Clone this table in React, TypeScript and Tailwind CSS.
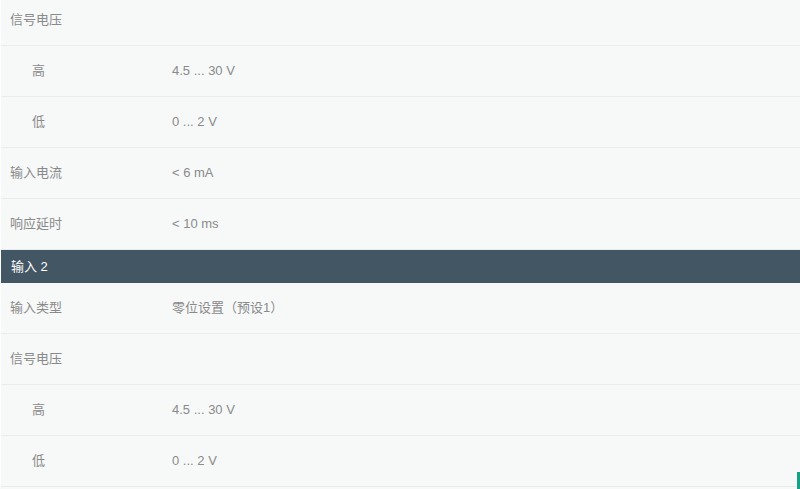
import React from "react";

type Row = { label: string; value?: string; indent?: boolean; header?: boolean };

const rows: Row[] = [
  { label: "信号电压" },
  { label: "高", value: "4.5 ... 30 V", indent: true },
  { label: "低", value: "0 ... 2 V", indent: true },
  { label: "输入电流", value: "< 6 mA" },
  { label: "响应延时", value: "< 10 ms" },
  { label: "输入 2", header: true },
  { label: "输入类型", value: "零位设置（预设1）" },
  { label: "信号电压" },
  { label: "高", value: "4.5 ... 30 V", indent: true },
  { label: "低", value: "0 ... 2 V", indent: true },
];

export default function App() {
  return (
    <div
      className="relative w-[800px] h-[489px] overflow-hidden bg-[#f7f9f9]"
      style={{ fontFamily: '"Liberation Sans", Arial, "Noto Sans CJK SC", sans-serif' }}
    >
      <div className="-mt-[5px] border-l border-[#ffffff]">
        {rows.map((r, i) =>
          r.header ? (
            <div
              key={i}
              className="h-[33px] bg-[#435663] text-white text-[13px] flex items-center pl-[10px]"
            >
              {r.label}
            </div>
          ) : (
            <div
              key={i}
              className="h-[51px] flex items-center border-b border-[#e9ecec] text-[13px] text-[#8a8a8a]"
            >
              <div className={`w-[171px] shrink-0 ${r.indent ? "pl-[31px]" : "pl-[9px]"}`}>{r.label}</div>
              <div>{r.value}</div>
            </div>
          )
        )}
      </div>
      <div className="absolute right-0 bottom-0 w-[3px] h-[17px] bg-[#16a085]" />
    </div>
  );
}
